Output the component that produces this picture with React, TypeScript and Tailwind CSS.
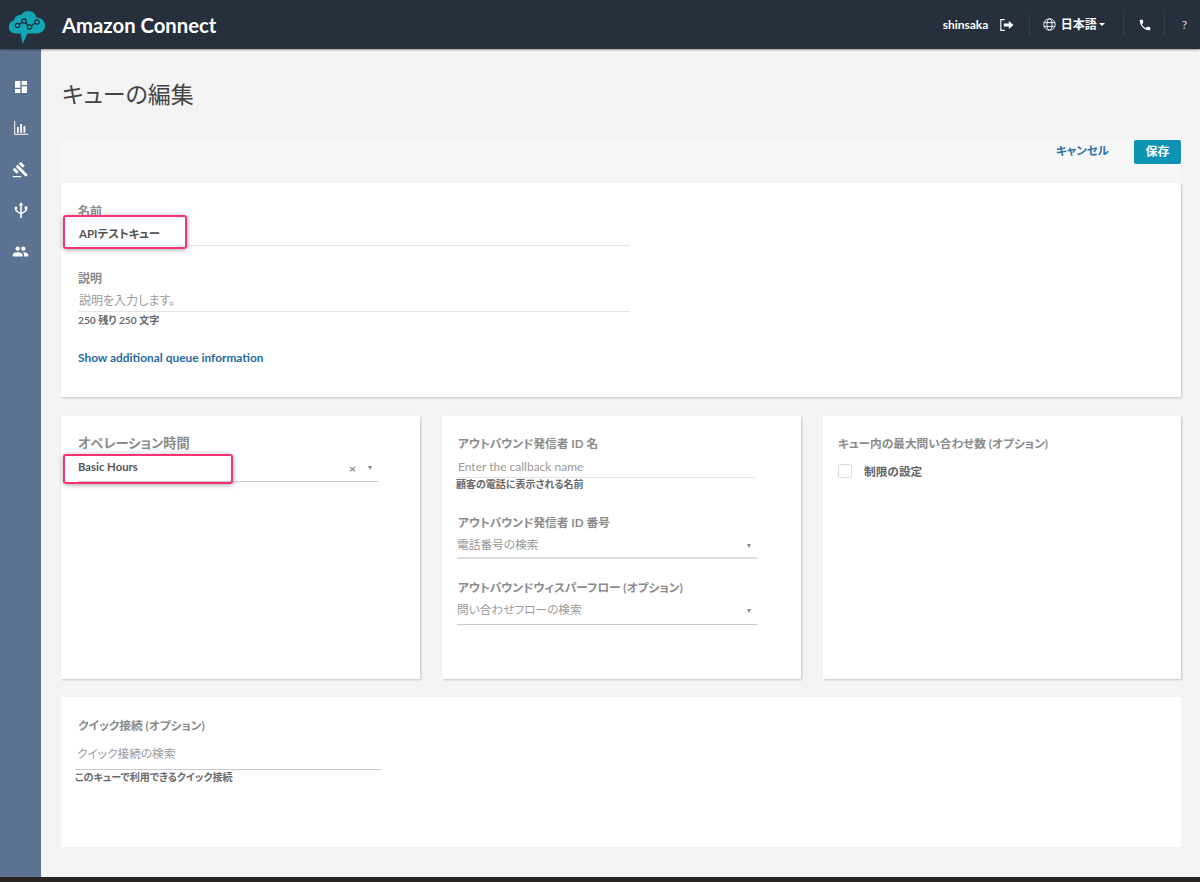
import React from "react";
import { MdDashboard, MdGavel, MdPeople, MdPhone } from "react-icons/md";

const font = "font-['Lato','Noto_Sans_CJK_JP',sans-serif] [font-feature-settings:'palt']";

function Logo() {
  return (
    <svg width="38" height="42" viewBox="0 0 38 42" className="shrink-0">
      <path
        d="M8 29.500C3.600 29.500.8 26.600.8 23c0-3.200 2.200-5.700 5.200-6.400C6.600 12.800 9.600 10.500 13 11c1.600-2.800 4.500-4 7.300-4 4.200 0 7.400 2.800 8.200 6.600 4.500.2 8.600 3.200 8.600 8 0 4.500-3.600 7.900-8 7.900H19.500L14.500 40l-1.700-10.500z"
        fill="#12a5b5"
      />
      <path d="M9.500 21.500l6.500-4.500 5.500 6 7.500-5" fill="none" stroke="#1d2a36" strokeWidth="1.200" />
      <circle cx="9.500" cy="21.500" r="2.200" fill="#12a5b5" stroke="#1d2a36" strokeWidth="1.200" />
      <circle cx="16" cy="17" r="2.200" fill="#12a5b5" stroke="#1d2a36" strokeWidth="1.200" />
      <circle cx="21.500" cy="23" r="2.200" fill="#12a5b5" stroke="#1d2a36" strokeWidth="1.200" />
      <circle cx="29" cy="18" r="2.200" fill="#12a5b5" stroke="#1d2a36" strokeWidth="1.200" />
    </svg>
  );
}

function ChartIcon() {
  return (
    <svg width="14" height="14" viewBox="0 0 14 14" fill="none">
      <path d="M.7 0v13.300H14" stroke="#fff" strokeWidth="1" />
      <rect x="3" y="6" width="1.800" height="5.800" fill="#fff" />
      <rect x="6.200" y="3" width="1.800" height="8.800" fill="#fff" />
      <rect x="9.500" y="5" width="1.800" height="6.800" fill="#fff" />
    </svg>
  );
}

function ForkIcon() {
  return (
    <svg width="14" height="17" viewBox="0 0 14 17" fill="none">
      <path d="M7 3v13" stroke="#fff" strokeWidth="1.600" />
      <path d="M7 0l2.400 3.600H4.600z" fill="#fff" />
      <path d="M2 7v1.500L7 12M12 6v2.500L7 12" stroke="#fff" strokeWidth="1.500" />
      <circle cx="2" cy="6" r="1.500" fill="#fff" />
      <rect x="10.600" y="4.400" width="2.800" height="2.800" fill="#fff" />
    </svg>
  );
}

function Logout() {
  return (
    <svg width="14" height="12" viewBox="0 0 15 13" fill="none">
      <path d="M5 .7H.8v11.600H5" stroke="#fff" strokeWidth="1.200" />
      <path d="M4 5h5.500V2.200L14.500 6.500 9.500 10.800V8H4z" fill="#fff" />
    </svg>
  );
}

function Globe() {
  return (
    <svg width="13" height="13" viewBox="0 0 13 13" fill="none" stroke="#fff" strokeWidth="0.900">
      <circle cx="6.500" cy="6.500" r="5.700" />
      <ellipse cx="6.500" cy="6.500" rx="2.600" ry="5.700" />
      <path d="M1 4.600h11M1 8.400h11" />
    </svg>
  );
}

function Label({ children, className = "" }: { children: React.ReactNode; className?: string }) {
  return <div className={`text-[11.700px] leading-[16px] font-bold text-[#8b8b8b] ${className}`}>{children}</div>;
}

function SmallCaret({ className = "" }: { className?: string }) {
  return <span className={`h-0 w-0 border-x-[2.500px] border-t-[4px] border-x-transparent border-t-[#888] ${className}`} />;
}

function Highlight({ className }: { className: string }) {
  return (
    <div className={`absolute rounded-[3px] border-[2px] border-[#f7346f] shadow-[0_1px_5px_rgba(0,0,0,0.35)] ${className}`} />
  );
}

export default function App() {
  return (
    <div className={`${font} flex h-[882px] w-[1200px] flex-col overflow-hidden bg-[#f4f4f4]`}>
      <header className="z-10 flex h-[49px] shrink-0 items-center bg-[#262f3c] pl-[8px] text-white shadow-[0_1px_2px_rgba(0,0,0,0.4)]">
        <Logo />
        <span className="ml-[16px] text-[20.300px] leading-[26px] font-bold">Amazon Connect</span>
        <div className="ml-auto flex items-center">
          <span className="w-[46px] text-[12px] font-bold">shinsaka</span>
          <span className="ml-[11px] flex"><Logout /></span>
          <span className="ml-[15px] h-[22px] w-px bg-[#38424f]" />
          <span className="ml-[13px] flex"><Globe /></span>
          <span className="ml-[5px] w-[34px] whitespace-nowrap text-[12px] font-bold">日本語</span>
          <span className="ml-[4px] h-0 w-0 border-x-[3px] border-t-[3px] border-x-transparent border-t-white" />
          <span className="ml-[18px] h-[22px] w-px bg-[#38424f]" />
          <span className="ml-[14px] flex"><MdPhone size={14} /></span>
          <span className="ml-[12px] h-[22px] w-px bg-[#38424f]" />
          <span className="ml-[17px] mr-[13px] text-[12px] text-[#d8dadd]">?</span>
        </div>
      </header>

      <div className="flex min-h-0 flex-1">
        <aside className="flex w-[41px] shrink-0 flex-col items-center gap-[25px] bg-[#5b7390] pt-[30px] text-white">
          <span className="flex h-[16px] items-center"><MdDashboard size={16} /></span>
          <span className="flex h-[16px] items-center"><ChartIcon /></span>
          <span className="flex h-[16px] items-center"><MdGavel size={17} /></span>
          <span className="flex h-[16px] items-center"><ForkIcon /></span>
          <span className="flex h-[16px] items-center"><MdPeople size={17} /></span>
        </aside>

        <main className="flex-1 pl-[20px] pr-[19px]">
          <div className="flex h-[91px] items-start pt-[27px]">
            <h1 className="pl-px text-[23px] leading-[36px] font-normal text-[#444]">キューの編集</h1>
          </div>

          <div className="flex h-[43px] items-start justify-end bg-[#f7f7f7]">
            <a className="mr-[25px] mt-[2px] text-[11.500px] leading-[18px] font-bold text-[#2f70a8]">キャンセル</a>
            <button className="h-[24px] w-[47px] rounded-[2px] bg-[#0e93b4] text-[12px] font-bold text-white">保存</button>
          </div>

          <section className="relative h-[214px] bg-white px-[17px] pt-[21px] shadow-[1px_1px_2px_rgba(0,0,0,0.2)]">
            <Label className="text-[12px]">名前</Label>
            <div className="mt-[4px] h-[22px] w-[552px] border-b border-[#e5e5e5] pl-[1px] text-[11.500px] leading-[20px] font-bold text-[#555]">APIテストキュー</div>
            <Label className="mt-[25px] text-[12px]">説明</Label>
            <div className="mt-[2px] h-[23px] w-[552px] border-b border-[#e5e5e5] pl-[1px] text-[12px] leading-[24px] text-[#999]">説明を入力します。</div>
            <div className="mt-[1px] text-[10.200px] leading-[14px] font-bold text-[#6a6a6a]">250 残り 250 文字</div>
            <a className="mt-[22px] block text-[11.900px] leading-[18px] font-bold text-[#1f6ba5]">Show additional queue information</a>
            <Highlight className="left-[2px] top-[32px] h-[34px] w-[124px]" />
          </section>

          <div className="mt-[19px] grid h-[263px] grid-cols-[359px_359px_358px] gap-x-[22px]">
            <section className="relative bg-white pl-[17px] pt-[19px] shadow-[1px_1px_2px_rgba(0,0,0,0.2)]">
              <Label className="text-[13.200px]">オペレーション時間</Label>
              <div className="mt-[8px] flex h-[23px] w-[300px] items-start border-b border-[#c8c8c8]">
                <span className="text-[11.300px] leading-[16px] font-bold text-[#555]">Basic Hours</span>
                <span className="ml-auto mt-[2px] text-[12px] leading-[16px] font-bold text-[#888]">×</span>
                <SmallCaret className="ml-[12px] mr-[6px] mt-[7px]" />
              </div>
              <Highlight className="left-[2px] top-[38px] h-[30px] w-[170px]" />
            </section>

            <section className="bg-white pl-[15px] pt-[19px] shadow-[1px_1px_2px_rgba(0,0,0,0.2)]">
              <Label className="pl-[1px]">アウトバウンド発信者 ID 名</Label>
              <div className="ml-[1px] mt-[7px] h-[20px] w-[297px] border-b border-[#e5e5e5] text-[12px] leading-[17px] text-[#999]">Enter the callback name</div>
              <div className="-ml-px -mt-px text-[10px] leading-[14px] font-bold text-[#6a6a6a]">顧客の電話に表示される名前</div>
              <Label className="mt-[23px] pl-[1px]">アウトバウンド発信者 ID 番号</Label>
              <div className="mt-[3px] flex h-[26px] w-[300px] border-b-2 border-[#dcdcdc] text-[11.700px] leading-[22px] text-[#999]">
                <span>電話番号の検索</span>
                <SmallCaret className="ml-auto mr-[6px] mt-[11px]" />
              </div>
              <Label className="mt-[20px] pl-[1px]">アウトバウンドウィスパーフロー (オプション)</Label>
              <div className="mt-[3px] flex h-[27px] w-[300px] border-b border-[#c8c8c8] text-[11.700px] leading-[22px] text-[#999]">
                <span>問い合わせフローの検索</span>
                <SmallCaret className="ml-auto mr-[6px] mt-[11px]" />
              </div>
            </section>

            <section className="bg-white pl-[15px] pt-[19px] shadow-[1px_1px_2px_rgba(0,0,0,0.2)]">
              <Label>キュー内の最大問い合わせ数 (オプション)</Label>
              <div className="mt-[12px] flex items-center">
                <span className="h-[14px] w-[14px] rounded-[2px] border border-[#ddd] bg-white" />
                <span className="ml-[12px] text-[11.700px] leading-[16px] font-bold text-[#666]">制限の設定</span>
              </div>
            </section>
          </div>

          <section className="mt-[18px] h-[150px] bg-white pl-[16px] pt-[20px]">
            <Label className="pl-[1px]">クイック接続 (オプション)</Label>
            <div className="-ml-[2px] mt-[9px] h-[28px] w-[306px] border-b border-[#c8c8c8] pl-[2px] text-[11.700px] leading-[22px] text-[#999]">クイック接続の検索</div>
            <div className="-ml-[2px] text-[10.100px] leading-[14px] font-bold text-[#6a6a6a]">このキューで利用できるクイック接続</div>
          </section>
        </main>
      </div>

      <div className="h-[5px] shrink-0 bg-[#2a2623]" />
    </div>
  );
}
